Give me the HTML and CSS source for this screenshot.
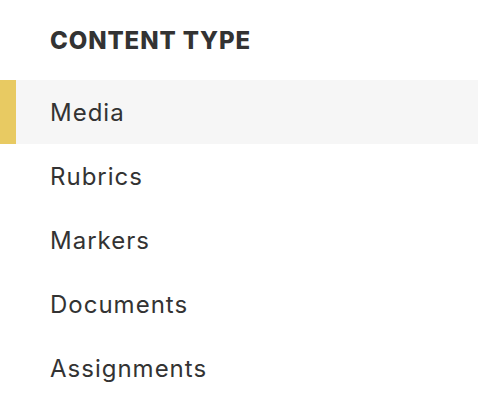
FILE: index.html
```html
<!DOCTYPE html>
<html>
<head>
<meta charset="utf-8">
<link rel="stylesheet" href="styles.css">
</head>
<body>
<nav class="filter">
  <h2 class="filter-title">CONTENT TYPE</h2>
  <ul class="filter-list">
    <li class="filter-item is-active">Media</li>
    <li class="filter-item">Rubrics</li>
    <li class="filter-item">Markers</li>
    <li class="filter-item">Documents</li>
    <li class="filter-item">Assignments</li>
  </ul>
</nav>
</body>
</html>
```
FILE: styles.css
```css
html, body {
  margin: 0;
  padding: 0;
  background: #ffffff;
}
.filter {
  font-family: Inter, "Open Sans", sans-serif;
  color: #333333;
}
.filter-title {
  margin: 0;
  height: 80px;
  display: flex;
  align-items: center;
  padding-left: 50px;
  font-size: 24px;
  font-weight: 800;
  letter-spacing: 0.9px;
}
.filter-list {
  list-style: none;
  margin: 0;
  padding: 0;
}
.filter-item {
  height: 64px;
  display: flex;
  align-items: center;
  padding-left: 50px;
  font-size: 24px;
  font-weight: 400;
  letter-spacing: 1px;
}
.filter-item.is-active {
  background: #f6f6f6;
  box-shadow: inset 16px 0 0 #e8ca62;
}
```
